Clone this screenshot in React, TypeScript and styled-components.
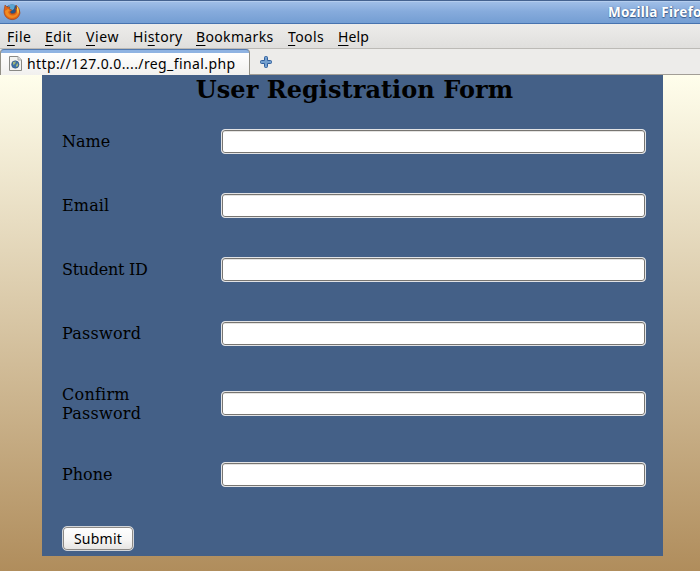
import React from 'react';
import styled, { createGlobalStyle } from 'styled-components';

const Global = createGlobalStyle`
  * { box-sizing: border-box; }
  html, body { margin: 0; overflow: hidden; }
`;
const Window = styled.div`
  width: 700px;
  height: 571px;
  overflow: hidden;
  display: flex;
  flex-direction: column;
  color: #000;
  font: 14px/20px "Noto Sans", sans-serif;
`;
const TitleBar = styled.header`
  height: 24px;
  flex: none;
  display: flex;
  justify-content: space-between;
  border-top: 1px solid #456390;
  border-bottom: 1px solid #4773af;
  background: linear-gradient(#a2c0e8, #86abdc 48%, #749ed3);
  box-shadow: inset 0 1px #b4cdee;
`;
const Logo = styled.svg`
  display: block;
  margin: 2px 0 0 3px;
`;
const WindowTitle = styled.div`
  width: 92px;
  overflow: hidden;
  white-space: nowrap;
  color: #fff;
  font-weight: 700;
  font-size: 13.5px;
  line-height: 23px;
  letter-spacing: .25px;
  text-shadow: 0 1px 1px #34598b, 1px 0 1px #5679aa;
`;
const MenuBar = styled.nav`
  height: 25px;
  flex: none;
  display: flex;
  padding: 3px 0 0 7px;
  background: linear-gradient(#edecea, #e0dfdd);
  border-bottom: 1px solid #bcbab6;
`;
const MenuItem = styled.span<{ $slot: number; $track: number }>`
  width: ${p => p.$slot}px;
  white-space: nowrap;
  letter-spacing: ${p => p.$track}px;
`;
const AccessKey = styled.span`
  text-decoration: underline;
  text-decoration-thickness: 1px;
  text-underline-offset: 3px;
  text-decoration-skip-ink: none;
`;
const TabStrip = styled.div`
  height: 26px;
  flex: none;
  display: flex;
  background: #edecea;
  border-bottom: 1px solid #a29e96;
`;
const Tab = styled.div`
  width: 250px;
  height: 26px;
  display: flex;
  padding: 4px 0 0 7px;
  border: 1px solid #929087;
  border-top-color: #5279ae;
  border-bottom: 0;
  border-radius: 4px 4px 0 0;
  background: linear-gradient(#8fb3e2 0 3px, #fff 3px, #f1f0ee);
`;
const PageIcon = styled.svg`
  display: block;
  margin-top: 1px;
`;
const TabTitle = styled.span`
  margin-left: 4px;
  white-space: nowrap;
  letter-spacing: .4px;
`;
const NewTab = styled.svg`
  display: block;
  margin: 7px 0 0 10px;
`;
const Page = styled.main`
  flex: 1;
  padding-left: 42px;
  background: linear-gradient(#fffeec, #b08d5c);
`;
const Form = styled.form`
  width: 621px;
  height: 481px;
  padding-left: 20px;
  background: #446087;
  font: 16px/19px "DejaVu Serif", serif;
`;
const Heading = styled.h1`
  height: 34px;
  margin: 0 0 0 -20px;
  padding-left: 4px;
  text-align: center;
  font-size: 24px;
  line-height: 29px;
  letter-spacing: .04px;
`;
const Row = styled.div<{ $height: number }>`
  height: ${p => p.$height}px;
  display: grid;
  grid-template-columns: 159px 425px;
  align-items: center;
`;
const Label = styled.label<{ $track: number }>`
  width: 110px;
  letter-spacing: ${p => p.$track}px;
`;
const Field = styled.input`
  width: 425px;
  height: 25px;
  padding: 0 5px;
  border: 1px solid #e2e3e5;
  border-radius: 4px;
  outline: 0;
  background: #fff;
  box-shadow: inset 0 0 0 1px #777571, inset 0 2px #e4e3e1;
`;
const Submit = styled.button`
  display: block;
  width: 72px;
  height: 25px;
  margin-top: 19px;
  padding: 0;
  border: 1px solid #d2d5d9;
  border-radius: 5px;
  background: linear-gradient(#fff, #f7f6f5 55%, #e5e3e1);
  box-shadow: inset 0 0 0 1px #8d8a86;
  color: #000;
  font: 14px/21px "Noto Sans", sans-serif;
  letter-spacing: .25px;
`;

const menus = [
  { name: 'File', key: 0, slot: 38, track: 0.5 },
  { name: 'Edit', key: 0, slot: 41, track: 0.5 },
  { name: 'View', key: 0, slot: 47, track: 0.6 },
  { name: 'History', key: 2, slot: 63, track: 0.35 },
  { name: 'Bookmarks', key: 0, slot: 92, track: 0.35 },
  { name: 'Tools', key: 0, slot: 50, track: 0.4 },
  { name: 'Help', key: 0, slot: 50, track: 0.1 },
];
const fields = [
  { name: 'Name', height: 64, track: 0 },
  { name: 'Email', height: 64, track: 0.15 },
  { name: 'Student ID', height: 64, track: -0.28 },
  { name: 'Password', type: 'password', height: 64, track: 0.25 },
  { name: 'Confirm Password', type: 'password', height: 77, track: 0.25 },
  { name: 'Phone', height: 65, track: 0 },
];

export default function App() {
  return (
    <Window>
      <Global />
      <TitleBar>
        <Logo width="18" height="18" viewBox="0 0 18 18">
          <circle cx="9" cy="9" r="7.5" fill="#265488" />
          <path d="M5 3Q8 0 12 2L11 6 8 8 6 7Z" fill="#5aa5d2" />
          <path d="M2 2L4 4 7 4 6 6 9 7 7 9Q8 12 12 10Q14 8 12 5L14 6 13 2Q17 5 17 10C16 15 12 17 8 16.5C3 16 0 11 1.3 6Z" fill="#df6418" stroke="#9b431f" strokeWidth=".6" />
          <path d="M2 8L5 6 7 7 5 9Q7 14 12 12Q15 10 14 6Q17 10 14 13Q9 17 4 13Q2 11 2 8Z" fill="#f18b20" />
          <path d="M14 3Q17 7 15 11L14 6Z" fill="#ffd34a" />
        </Logo>
        <WindowTitle>Mozilla Firefox</WindowTitle>
      </TitleBar>
      <MenuBar>
        {menus.map(m => (
          <MenuItem key={m.name} $slot={m.slot} $track={m.track}>
            {m.name.slice(0, m.key)}<AccessKey>{m.name[m.key]}</AccessKey>{m.name.slice(m.key + 1)}
          </MenuItem>
        ))}
      </MenuBar>
      <TabStrip>
        <Tab>
          <PageIcon width="15" height="17" viewBox="0 0 15 17">
            <path d="M1.5 1.5H10L13.5 5V15.5H1.5Z" fill="#f3f3f0" stroke="#898985" />
            <path d="M10 1.5V5H13.5" fill="#ddd" stroke="#aaa" />
            <circle cx="7.3" cy="9.5" r="3.7" fill="#3e71a8" stroke="#31577f" strokeWidth=".6" />
            <path d="M5 7L8 6.5 7 9 5 10ZM8 10L10 8 10 11 8 12Z" fill="#a1b779" />
          </PageIcon>
          <TabTitle>http://127.0.0..../reg_final.php</TabTitle>
        </Tab>
        <NewTab width="13" height="13" viewBox="0 0 13 13">
          <path d="M4.5 1.5Q4.5 .5 5.5 .5H6.5Q7.5 .5 7.5 1.5V4.5H10.5Q11.5 4.5 11.5 5.5V6.5Q11.5 7.5 10.5 7.5H7.5V10.5Q7.5 11.5 6.5 11.5H5.5Q4.5 11.5 4.5 10.5V7.5H1.5Q.5 7.5 .5 6.5V5.5Q.5 4.5 1.5 4.5H4.5Z" fill="#729fcf" stroke="#315f9d" />
        </NewTab>
      </TabStrip>
      <Page>
        <Form onSubmit={e => e.preventDefault()}>
          <Heading>User Registration Form</Heading>
          {fields.map(f => (
            <Row key={f.name} $height={f.height}>
              <Label htmlFor={f.name} $track={f.track}>{f.name}</Label>
              <Field id={f.name} type={f.type ?? 'text'} />
            </Row>
          ))}
          <Submit type="submit">Submit</Submit>
        </Form>
      </Page>
    </Window>
  );
}
